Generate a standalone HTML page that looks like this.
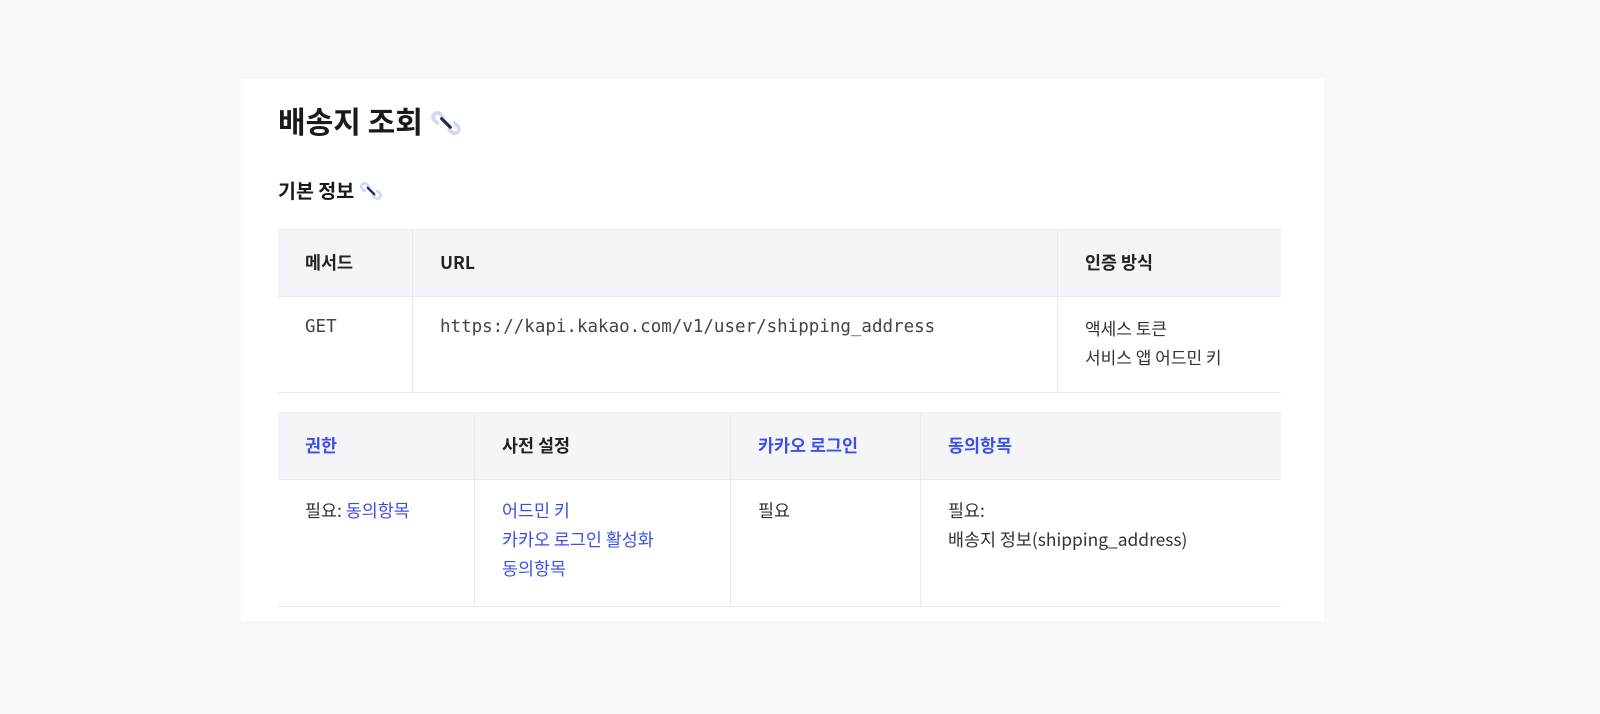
<!DOCTYPE html>
<html><head><meta charset="utf-8"><style>
body{margin:0;background:#f7f8f8;width:1600px;height:714px;font-family:"Noto Sans CJK KR","Liberation Sans",sans-serif;color:#222}
.card{position:absolute;left:241px;top:79px;width:1083px;height:542px;background:#fff}
h1{position:absolute;left:37px;top:20px;margin:0;font-size:30px;font-weight:700;line-height:42px;color:#1a1a1a}
h2{position:absolute;left:37px;top:97px;margin:0;font-size:19.5px;font-weight:700;line-height:28px;color:#1a1a1a}
svg{vertical-align:middle}
table{position:absolute;left:37px;border-collapse:collapse;font-size:17.4px;color:#333}
td,th{border-bottom:1px solid #e9e9ee;border-left:1px solid #e9e9ee;text-align:left;vertical-align:top;padding:0 0 0 27px}
tr>*:first-child{border-left:none}
th{background:#f4f5f9;height:66px;vertical-align:middle;font-weight:700;color:#222;border-top:1px solid #eceef2;line-height:24px}
td{line-height:29px;padding-top:16px}
.m{font-family:"DejaVu Sans Mono",monospace;font-size:17.5px;color:#444}
a{color:#3d4fe6;text-decoration:none}
</style></head><body>
<div class="card">
<h1>배송지 조회 <svg width="32" height="32" viewBox="0 0 30 30" style="margin-top:-4px"><path d="M12 9 L9 6 a4 4 0 0 0-5.5 5.5 L7 15 M18 21 L21 24 a4 4 0 0 0 5.5-5.5 L23 15" fill="none" stroke="#d4d8f8" stroke-width="3.5" stroke-linecap="round"/><path d="M11 11 L19 19" stroke="#1f2a5c" stroke-width="3" stroke-linecap="round"/></svg></h1>
<h2>기본 정보 <svg width="24" height="24" viewBox="0 0 30 30" style="margin-top:-3px"><path d="M12 9 L9 6 a4 4 0 0 0-5.5 5.5 L7 15 M18 21 L21 24 a4 4 0 0 0 5.5-5.5 L23 15" fill="none" stroke="#d4d8f8" stroke-width="3.5" stroke-linecap="round"/><path d="M11 11 L19 19" stroke="#1f2a5c" stroke-width="3" stroke-linecap="round"/></svg></h2>
<table style="top:150px;width:1003px">
<tr><th style="width:107px">메서드</th><th style="width:617px">URL</th><th>인증 방식</th></tr>
<tr style="height:96px"><td class="m">GET</td><td class="m">https://kapi.kakao.com/v1/user/shipping_address</td><td style="font-size:17px">액세스 토큰<br>서비스 앱 어드민 키</td></tr>
</table>
<table style="top:333px;width:1003px">
<tr><th style="width:169px"><a>권한</a></th><th style="width:228px">사전 설정</th><th style="width:162px"><a>카카오 로그인</a></th><th><a>동의항목</a></th></tr>
<tr style="height:127px"><td>필요: <a>동의항목</a></td><td><a>어드민 키</a><br><a>카카오 로그인 활성화</a><br><a>동의항목</a></td><td>필요</td><td>필요:<br>배송지 정보(shipping_address)</td></tr>
</table>
</div>
</body></html>
